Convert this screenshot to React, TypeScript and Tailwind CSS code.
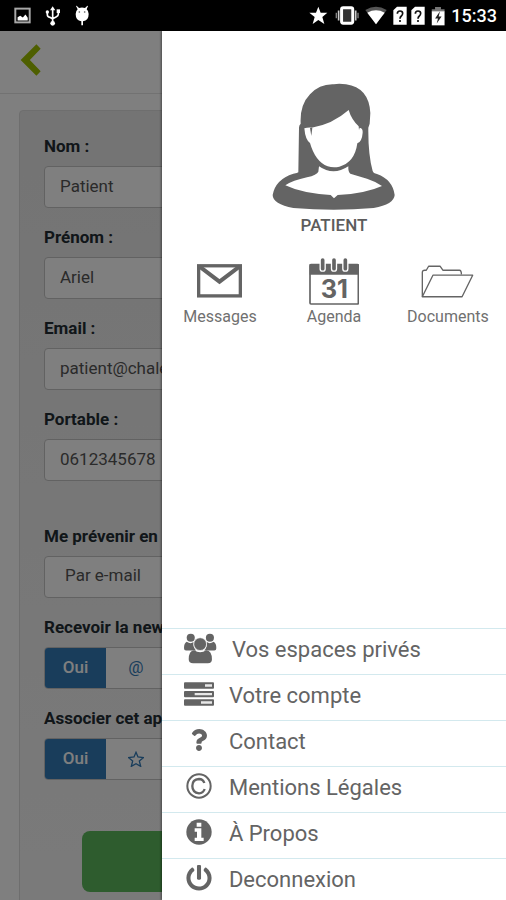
import type { ReactNode } from "react";
import { FaPowerOff, FaQuestion } from "react-icons/fa";

function StatusBar() {
  return (
    <header className="flex h-[31px] shrink-0 items-center justify-between bg-black pl-[14px] pr-[9px] text-white">
      <div className="flex items-center">
        <svg viewBox="42 22 52 50" className="h-[17px] w-[17px]" aria-hidden="true">
          <rect x="46" y="26" width="44" height="42" fill="none" stroke="#a8a8a8" strokeWidth="6" />
          <path d="M53 62V52l8-4 8 5 8-9 7 10v8z" fill="#fff" />
        </svg>
        <svg viewBox="136 18 48 60" className="ml-[14px] h-5 w-4" fill="none" stroke="#fff" strokeWidth="5" aria-hidden="true">
          <path d="M159 28v42M143 38v6q0 6 8 8l8 5M176 38v5q0 5-7 8l-10 5" />
          <path d="M151 31l8-12 8 12z" fill="#fff" stroke="none" />
          <circle cx="159" cy="70" r="7" fill="#fff" stroke="none" />
          <circle cx="143" cy="36" r="5" fill="#fff" stroke="none" />
          <path d="M171 28h10v11h-10z" fill="#fff" stroke="none" />
        </svg>
        <svg viewBox="222 16 48 63" className="ml-[13px] h-[21px] w-4" aria-hidden="true">
          <path d="M230 18l7 7q9-3 18 0l7-7 2 1-4 10q6 5 6 14 0 20-17 22v12h-5V65q-17-2-17-22 0-9 6-14l-5-10z" fill="#fff" />
          <circle cx="238" cy="37" r="2.500" fill="#555" />
          <circle cx="254" cy="37" r="2.500" fill="#555" />
        </svg>
      </div>
      <div className="flex items-center">
        <svg viewBox="170 20 57 57" className="h-[19px] w-[19px]" fill="#fff" aria-hidden="true">
          <path d="M198 22l7 18h20l-15 13 6 21-18-12-17 12 6-21-16-13h20z" />
        </svg>
        <svg viewBox="247 20 73 57" className="ml-[7px] h-[19px] w-6" aria-hidden="true">
          <rect x="267" y="25" width="34" height="47" rx="5" fill="#333" stroke="#fff" strokeWidth="9" />
          <path d="M258 33v31M310 33v31" stroke="#ccc" strokeWidth="5" />
          <path d="M251 40v17M317 40v17" stroke="#888" strokeWidth="4" />
        </svg>
        <svg viewBox="337 20 66 57" className="ml-[6px] h-[19px] w-[22px]" aria-hidden="true">
          <path d="M338 32q32-19 64 0l-32 43z" fill="#555" />
          <path d="M344 40q26-14 52 0l-26 35z" fill="#fff" />
        </svg>
        <div className="ml-[6px] flex gap-1">
          {[0, 1].map((slot) => (
            <svg key={slot} viewBox="422 20 42 57" className="h-[19px] w-[14px]" aria-hidden="true">
              <path d="M434 22h29v54h-40V33z" fill="#fff" />
              <path d="M435 43q0-8 8-8t8 7q0 5-4 8t-4 8M443 62v6" fill="none" stroke="#111" strokeWidth="5" />
            </svg>
          ))}
        </div>
        <svg viewBox="534 16 42 61" className="ml-[6px] h-5 w-[14px]" aria-hidden="true">
          <path d="M546 19h18v7h11v7h-39v-7h10z" fill="#777" />
          <path d="M536 32h39v43h-39z" fill="#fff" />
          <path d="M561 32l-15 22h9l-4 15 15-21h-9z" fill="#222" />
        </svg>
        <time className="ml-[6px] text-lg/6 font-medium">15:33</time>
      </div>
    </header>
  );
}

function Field({ label, id, children }: { label: string; id: string; children: ReactNode }) {
  return (
    <div>
      <label htmlFor={id} className="block whitespace-nowrap text-[17px]/6 font-bold text-[#222c33]">
        {label}
      </label>
      <div className="mt-2">{children}</div>
    </div>
  );
}

const inputClass =
  "block h-[42px] w-full appearance-none rounded border border-[#c4c4c4] bg-white px-[15px] pb-[2px] text-[17px] text-[#555]";

function Toggle({ id, children }: { id: string; children: ReactNode }) {
  return (
    <div className="flex h-[42px] overflow-hidden rounded border border-[#c4c4c4] bg-white text-[17px]">
      <button id={id} type="button" aria-pressed="true" className="w-[61px] bg-[#337ab7] font-medium text-white">
        Oui
      </button>
      <button type="button" aria-label="Non" className="flex w-[60px] items-center justify-center text-[#337ab7]">
        {children}
      </button>
    </div>
  );
}

function ProfilePage() {
  return (
    <div className="h-full overflow-hidden bg-white">
      <div className="flex h-[63px] items-center border-b border-[#e4e4e4] pb-1 pl-5">
        <button type="button" aria-label="Retour">
          <svg viewBox="60 132 64 96" className="h-8 w-[21px]" fill="#9cbe00">
            <path d="M110 132l13 14-33 34 33 34-13 14-48-48z" />
          </svg>
        </button>
      </div>
      <form className="mx-[19px] mt-4 rounded border border-[#dcdcdc] bg-linear-to-b from-[#e8e8e8] to-[#f5f5f5] px-6 pb-6 pt-[23px]">
        <div className="flex flex-col gap-[17px]">
          <Field label="Nom :" id="nom">
            <input id="nom" className={inputClass} defaultValue="Patient" />
          </Field>
          <Field label="Prénom :" id="prenom">
            <input id="prenom" className={inputClass} defaultValue="Ariel" />
          </Field>
          <Field label="Email :" id="email">
            <input id="email" className={inputClass} defaultValue="patient@chale" />
          </Field>
          <Field label="Portable :" id="portable">
            <input id="portable" className={inputClass} defaultValue="0612345678" />
          </Field>
        </div>
        <div className="mt-[43px] flex flex-col gap-[17px]">
          <Field label="Me prévenir en" id="canal">
            <select
              id="canal"
              className="block h-[42px] w-full appearance-none rounded border border-[#c4c4c4] bg-white px-5 pb-[2px] text-[17px] text-[#555]"
            >
              <option>Par e-mail</option>
            </select>
          </Field>
          <Field label="Recevoir la new" id="news">
            <Toggle id="news">@</Toggle>
          </Field>
          <Field label="Associer cet ap" id="appareil">
            <Toggle id="appareil">
              <svg viewBox="0 0 24 24" className="h-4 w-4" fill="none" stroke="currentColor" strokeWidth="2">
                <path d="M12 2l3 7 8 1-6 5 2 8-7-4-7 4 2-8-6-5 8-1z" />
              </svg>
            </Toggle>
          </Field>
        </div>
        <div className="mt-[51px] px-[38px]">
          <button type="submit" aria-label="Valider" className="block h-[61px] w-full rounded-lg bg-[#5cb85c]" />
        </div>
      </form>
    </div>
  );
}

function Avatar() {
  return (
    <svg viewBox="40 36 369 381" className="h-[127px] w-[123px]" aria-hidden="true">
      <path
        fill="#646464"
        d="M119 304L121 170Q121 162 126 158Q123 102 154 70Q183 38 226 40Q240 37 262 40Q331 50 335 126L333 158L329 170Q328 250 342 300Q344 307 355 309Q402 326 408 372Q406 400 345 411Q225 421 104 411Q42 399 42 372Q50 325 104 308Q117 306 119 304Z"
      />
      <path
        fill="#fff"
        d="M137 172Q147 169 159 170Q221 160 270 117Q278 145 300 166L301 177L303 170Q313 172 312 185Q310 212 296 217Q288 275 242 287Q224 291 207 286Q170 272 154 216Q140 207 137 172Z"
      />
      <path d="M154 171h7l-3 24z" fill="#646464" />
      <path
        fill="#fff"
        d="M181 286Q224 316 269 286Q268 303 275 308L325 323Q350 331 370 345Q320 368 237 372L226 382L216 372Q130 367 80 343Q102 328 145 319Q175 312 179 302Z"
      />
    </svg>
  );
}

function Shortcut({ label, children }: { label: string; children: ReactNode }) {
  return (
    <a href="#" className="flex w-[114px] flex-col items-center gap-[2px] text-base/5 text-[#707070]">
      <span className="flex h-12 items-center">{children}</span>
      {label}
    </a>
  );
}

function Shortcuts() {
  return (
    <div className="mt-5 flex justify-center">
      <Shortcut label="Messages">
        <svg viewBox="99 57 136 102" className="h-[34px] w-[45px]" fill="none" stroke="#646464" aria-hidden="true">
          <rect x="104" y="62" width="126" height="91" strokeWidth="10" />
          <path d="M106 64l61 46 61-46" strokeWidth="12" />
        </svg>
      </Shortcut>
      <Shortcut label="Agenda">
        <svg viewBox="431 38 150 141" className="h-[47px] w-[50px]" aria-hidden="true">
          <rect x="434" y="58" width="145" height="118" rx="3" fill="#fff" stroke="#646464" strokeWidth="5" />
          <path d="M433 56h147v32H433z" fill="#646464" />
          {[472, 506, 540].map((x) => (
            <g key={x} strokeLinecap="round">
              <path d={`M${x} 48v22`} stroke="#fff" strokeWidth="19" />
              <path d={`M${x} 44v26`} stroke="#646464" strokeWidth="11" />
            </g>
          ))}
          <text x="507" y="159" textAnchor="middle" fontSize="76" fontWeight="700" fill="#646464" fontFamily="Inter, sans-serif">
            31
          </text>
        </svg>
      </Shortcut>
      <Shortcut label="Documents">
        <svg viewBox="773 60 160 98" className="h-[33px] w-[53px]" fill="none" stroke="#646464" strokeWidth="4" strokeLinejoin="round" aria-hidden="true">
          <path d="M777 155V80q1-5 7-5h5l7-12h35l8 12h50q6 0 6 13" />
          <path d="M777 155l32-65h120l-32 65z" />
        </svg>
      </Shortcut>
    </div>
  );
}

function UsersIcon() {
  return (
    <svg viewBox="72 40 98 92" className="h-[31px] w-[33px]" fill="#646464">
      <circle cx="92" cy="54" r="12" />
      <circle cx="149" cy="54" r="12" />
      <path d="M80 66q12 8 20 1-1 17 8 25H78q-6 0-6-7 0-15 8-19zM160 66q-12 8-20 1 1 17-8 25h30q6 0 6-7 0-15-8-19z" />
      <path d="M102 91q18 12 36 0 17 2 17 27 0 12-12 12H99q-13 0-13-12 0-25 16-27z" />
      <circle cx="120" cy="73" r="19" stroke="#fff" strokeWidth="2" />
    </svg>
  );
}

function TasksIcon() {
  return (
    <svg viewBox="72 184 90 72" className="h-6 w-[30px]">
      <rect x="72" y="185" width="90" height="19" rx="3" fill="#646464" />
      <rect x="72" y="211" width="90" height="19" rx="3" fill="#646464" />
      <rect x="72" y="236" width="90" height="19" rx="3" fill="#646464" />
      <path d="M135 191h21v7h-21zM104 217h52v7h-52zM123 242h33v7h-33z" fill="#e8e8e8" />
    </svg>
  );
}

function CopyrightIcon() {
  return (
    <svg viewBox="78 38 78 78" className="h-[26px] w-[26px]" fill="none" stroke="#646464" strokeWidth="6">
      <circle cx="117" cy="77" r="35" />
      <path d="M133 68q-4-12-16-12-20 1-20 21t20 22q13-1 17-13" strokeWidth="7" />
    </svg>
  );
}

function InfoIcon() {
  return (
    <svg viewBox="78 176 78 78" className="h-[26px] w-[26px]">
      <circle cx="117" cy="215" r="38" fill="#646464" />
      <path d="M110 187h14v12h-14zM104 204h20v28h7v10h-27v-10h7v-18h-7z" fill="#fff" />
    </svg>
  );
}

const entries: { label: string; icon: ReactNode }[] = [
  { label: "Vos espaces privés", icon: <UsersIcon /> },
  { label: "Votre compte", icon: <TasksIcon /> },
  { label: "Contact", icon: <FaQuestion className="h-[22px] w-[22px]" /> },
  { label: "Mentions Légales", icon: <CopyrightIcon /> },
  { label: "À Propos", icon: <InfoIcon /> },
  { label: "Deconnexion", icon: <FaPowerOff className="h-[26px] w-[26px]" /> },
];

function Drawer() {
  return (
    <aside className="absolute inset-y-0 right-0 flex w-[68%] flex-col bg-white shadow-[-1px_0_2px_rgba(0,0,0,0.4)]">
      <div className="flex flex-col items-center pt-[52px]">
        <Avatar />
        <p className="mt-[3px] text-[17px] leading-6 font-medium text-[#5c5c5c]">PATIENT</p>
      </div>
      <Shortcuts />
      <nav className="mt-auto">
        <ul>
          {entries.map(({ label, icon }) => (
            <li key={label} className="border-t border-[#d3e9ee] pt-[6px] pb-[11px] last:pb-[7px]">
              <a href="#" className="flex h-7 items-center gap-[15px] pl-[22px] text-[22px] text-[#646464]">
                <span className="flex min-w-[30px] shrink-0 items-center justify-center pb-[2px]">{icon}</span>
                {label}
              </a>
            </li>
          ))}
        </ul>
      </nav>
    </aside>
  );
}

export default function App() {
  return (
    <div className="flex h-screen flex-col overflow-hidden font-[Roboto,sans-serif]">
      <StatusBar />
      <main className="relative min-h-0 flex-1">
        <ProfilePage />
        <div className="absolute inset-0 bg-black/50" />
        <Drawer />
      </main>
    </div>
  );
}
